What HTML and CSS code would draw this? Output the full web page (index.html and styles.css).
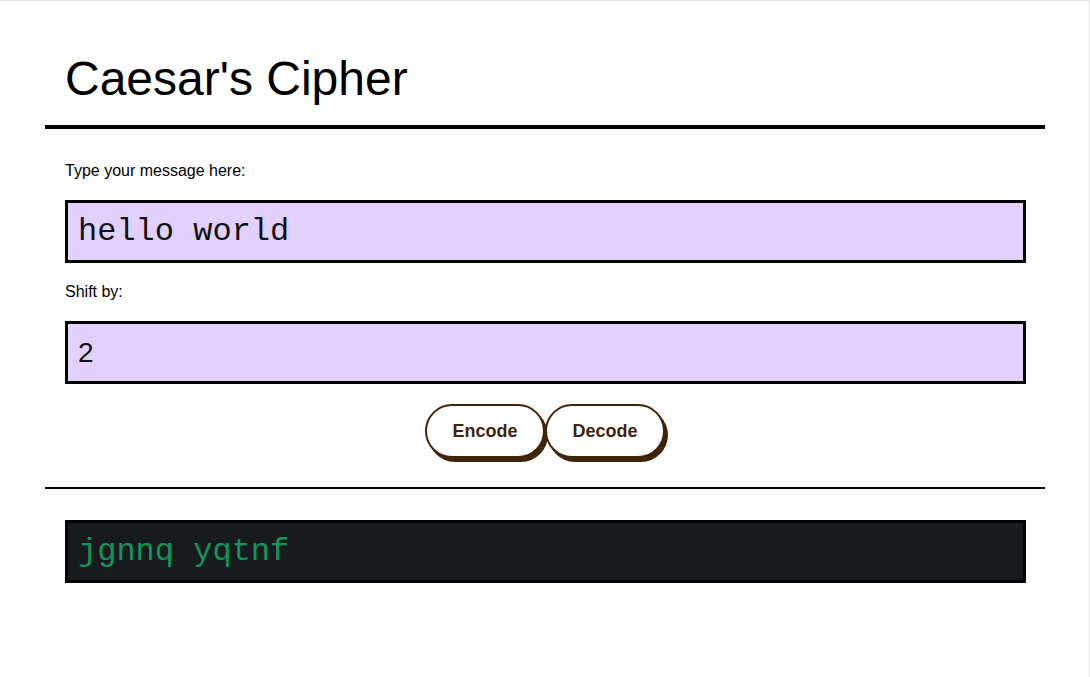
FILE: index.html
```html
<!DOCTYPE html>
<html lang="en">
<head>
<meta charset="utf-8">
<title>Caesar's Cipher</title>
<link rel="stylesheet" href="styles.css">
</head>
<body>
<div class="container">
  <header class="header">
    <h1 class="title">Caesar's Cipher</h1>
  </header>
  <main class="form">
    <label class="label" for="msg">Type your message here:</label>
    <input class="field field-text" id="msg" type="text" value="hello world">
    <label class="label" for="shift">Shift by:</label>
    <input class="field field-num" id="shift" type="text" value="2">
    <div class="actions">
      <button class="btn" type="button">Encode</button>
      <button class="btn" type="button">Decode</button>
    </div>
  </main>
  <section class="result">
    <div class="output">jgnnq yqtnf</div>
  </section>
</div>
</body>
</html>
```
FILE: styles.css
```css
html, body {
  margin: 0;
  padding: 0;
}
body {
  min-height: 100vh;
  background: #fff;
  box-shadow: inset -1px 1px 0 #e2e2e2;
  font-family: "Liberation Sans", Arial, Helvetica, sans-serif;
  color: #000;
}
.container {
  width: 1000px;
  margin: 0 auto;
}
.header {
  padding: 51px 20px 19px;
  border-bottom: 4px solid #000;
}
.title {
  margin: 0;
  font-size: 48px;
  font-weight: 400;
  line-height: 55px;
}
.form {
  display: flex;
  flex-direction: column;
  padding: 33px 20px 29px;
  border-bottom: 2px solid #000;
}
.label {
  font-size: 16px;
  line-height: 18px;
  margin-bottom: 20px;
}
.field {
  box-sizing: border-box;
  width: 961px;
  height: 63px;
  margin: 0 0 20px;
  padding: 0 10px;
  border: 3px solid #000;
  border-radius: 0;
  background: #e2d1fd;
  color: #111;
  outline: none;
}
.field-text {
  font-family: "Liberation Mono", "Courier New", monospace;
  font-size: 32px;
}
.field-num {
  font-family: "Liberation Sans", Arial, sans-serif;
  font-size: 28px;
}
.actions {
  display: flex;
  justify-content: center;
}
.btn {
  box-sizing: border-box;
  width: 120px;
  height: 54px;
  border: 2px solid #3f2409;
  border-radius: 27px;
  background: #fff;
  box-shadow: 3px 4px 0 #3f2409;
  color: #3f2409;
  font-family: "Liberation Sans", Arial, sans-serif;
  font-size: 18px;
  font-weight: 700;
  padding: 0;
  cursor: pointer;
}
.result {
  padding: 31px 20px;
}
.output {
  box-sizing: border-box;
  width: 961px;
  height: 63px;
  padding: 0 10px;
  border: 3px solid #000;
  background: #171b1e;
  color: #12945c;
  font-family: "Liberation Mono", "Courier New", monospace;
  font-size: 32px;
  display: flex;
  align-items: center;
}
```
